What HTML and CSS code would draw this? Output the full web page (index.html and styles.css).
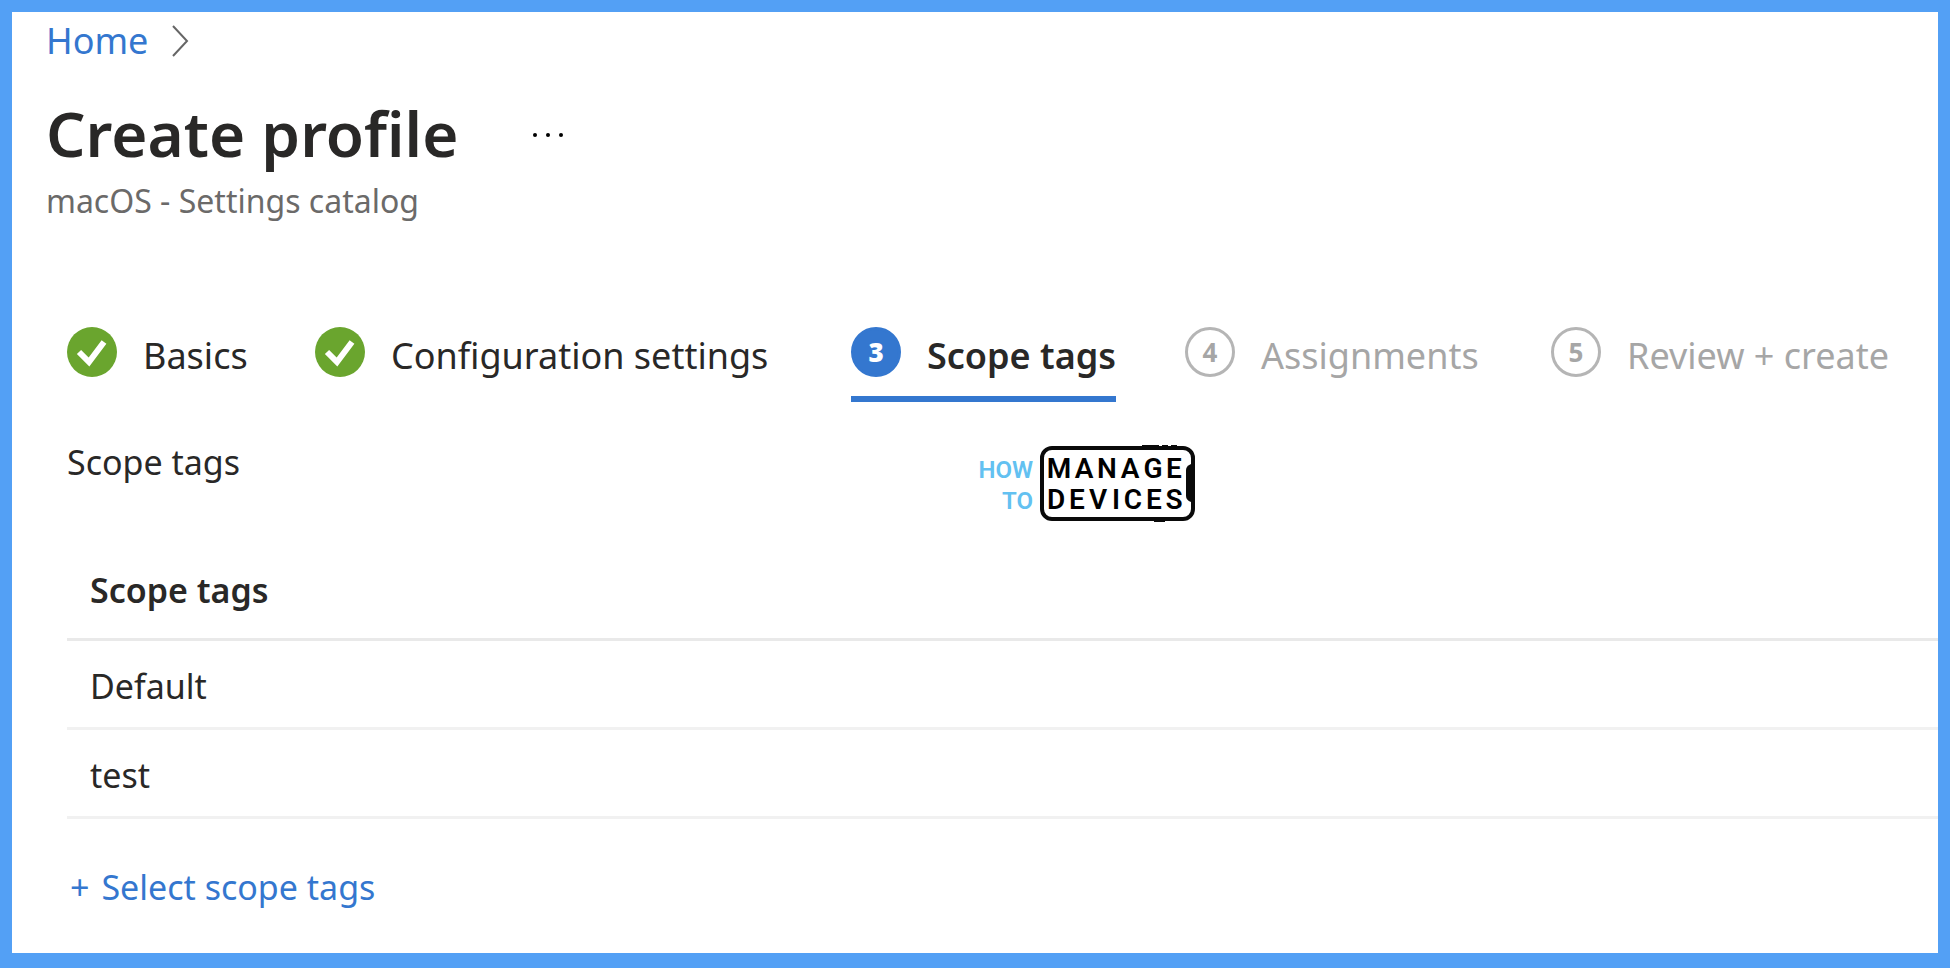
FILE: index.html
```html
<!DOCTYPE html>
<html lang="en">
<head>
    <meta charset="UTF-8">
    <meta name="viewport" content="width=device-width, initial-scale=1.0">
    <title>Create profile</title>
    <link rel="stylesheet" href="styles.css">
</head>
<body>
    <header class="header">
        <nav class="breadcrumb" aria-label="Breadcrumb">
            <a href="#">Home</a>
            <svg width="18" height="32" viewBox="0 0 18 32"><path d="M1 1 L15 16 L1 31" fill="none" stroke="#666" stroke-width="2"/></svg>
        </nav>
        <div class="title">
            <h1>Create profile</h1>
            <button class="more" aria-label="More">
                <svg width="32" height="6" viewBox="0 0 32 6"><circle cx="3" cy="3" r="2"/><circle cx="16" cy="3" r="2"/><circle cx="29" cy="3" r="2"/></svg>
            </button>
        </div>
        <p class="subtitle">macOS - Settings catalog</p>
    </header>

    <nav class="steps" aria-label="Steps">
        <button class="step">
            <svg width="50" height="50" viewBox="0 0 50 50"><circle cx="25" cy="25" r="25" fill="#6aa52e"/><path d="M12 25 L22 35 L37 15" fill="none" stroke="#fff" stroke-width="6"/></svg>
            <span>Basics</span>
        </button>
        <button class="step">
            <svg width="50" height="50" viewBox="0 0 50 50"><circle cx="25" cy="25" r="25" fill="#6aa52e"/><path d="M12 25 L22 35 L37 15" fill="none" stroke="#fff" stroke-width="6"/></svg>
            <span>Configuration settings</span>
        </button>
        <button class="step active">
            <b class="num">3</b>
            <span>Scope tags</span>
        </button>
        <button class="step todo">
            <b class="num">4</b>
            <span>Assignments</span>
        </button>
        <button class="step todo">
            <b class="num">5</b>
            <span>Review + create</span>
        </button>
    </nav>

    <main class="content">
        <div class="intro">
            <h2>Scope tags</h2>
            <svg class="logo" width="218" height="78" viewBox="0 0 218 78">
                <g class="howto">
                    <text x="54" y="34">HOW</text>
                    <text x="54" y="65">TO</text>
                </g>
                <rect x="63" y="4" width="151" height="71" rx="10" fill="none" stroke="#0a0a0a" stroke-width="4"/>
                <path d="M163 2 h17 M183 2 h6 M192 2 h6 M175 77 h11" stroke="#0a0a0a" stroke-width="2"/>
                <path d="M215 20 h-3 q-5 2 -5 6 v26 q0 4 5 6 h3 z" fill="#0a0a0a"/>
                <g class="brand">
                    <text x="80 105 128 151 174 195" y="34">MANAGE</text>
                    <text x="77 98 119 137 154 175 195" y="65">DEVICES</text>
                </g>
            </svg>
        </div>
        <table class="tags">
            <thead>
                <tr><th>Scope tags</th></tr>
            </thead>
            <tbody>
                <tr><td>Default</td></tr>
                <tr><td>test</td></tr>
            </tbody>
        </table>
        <a class="add" href="#"><span>+</span>Select scope tags</a>
    </main>
</body>
</html>
```
FILE: styles.css
```css
*{
    box-sizing: border-box;
}
body{
    margin: 0;
    min-height: 100vh;
    border: 12px solid #53a0f5;
    border-bottom-width: 15px;
    background-color: #fff;
    color: #292827;
    font-family: "Noto Sans", "Open Sans", sans-serif;
    font-size: 34px;
    line-height: 48px;
}
h1, h2, p{
    margin: 0;
}
a{
    color: #3477cf;
    text-decoration: none;
}
button{
    padding: 0;
    border: none;
    background: none;
    color: inherit;
    font: inherit;
    cursor: pointer;
}
.header{
    padding: 5px 34px 0;
}
.breadcrumb{
    display: flex;
    align-items: center;
    gap: 24px;
    font-size: 36px;
}
.title{
    display: flex;
    align-items: center;
    gap: 74px;
    margin-top: 24px;
}
.title h1{
    font-size: 62px;
    font-weight: 600;
    line-height: 88px;
}
.more{
    display: flex;
    padding-top: 4px;
}
.subtitle{
    color: #6b6a69;
    font-size: 32px;
}

.steps{
    display: grid;
    grid-template-columns: 248fr 536fr 334fr 366fr 349fr;
    justify-items: start;
    padding: 99px 38px 0 55px;
}
.step{
    display: flex;
    align-items: center;
    gap: 26px;
    padding-bottom: 16px;
    border-bottom: 6px solid transparent;
    font-size: 36px;
    white-space: nowrap;
}
.step span{
    padding-top: 8px;
}
.num{
    width: 50px;
    height: 50px;
    border: 3px solid #b5b5b5;
    border-radius: 50%;
    font-size: 26px;
    line-height: 44px;
}
.active{
    border-bottom-color: #3477cf;
    font-weight: 600;
}
.active .num{
    border-color: #3477cf;
    background-color: #3477cf;
    color: #fff;
}
.todo{
    color: #a6a6a6;
}

.content{
    padding: 36px 0 24px 55px;
}
.intro{
    display: grid;
    grid-template-columns: 95fr 100fr;
}
.intro h2{
    font-size: 34px;
    font-weight: 400;
}
.logo{
    margin-top: 6px;
    font-family: Roboto, "Liberation Sans", sans-serif;
    font-size: 28px;
    font-weight: 600;
}
.howto{
    fill: #63c1f1;
    font-size: 24px;
    text-anchor: end;
}
.brand{
    fill: #000;
    text-anchor: middle;
}
.tags{
    width: 100%;
    margin-top: 20px;
    border-collapse: collapse;
    text-align: left;
}
.tags th, .tags td{
    height: 89px;
    padding: 4px 23px 0;
    border-bottom: 3px solid #f1f1f1;
}
.tags th{
    height: 97px;
    padding-top: 0;
    border-bottom-color: #e9e9e9;
    font-weight: 600;
}
.add{
    display: inline-flex;
    gap: 12px;
    margin-top: 44px;
    padding-left: 3px;
}
```
